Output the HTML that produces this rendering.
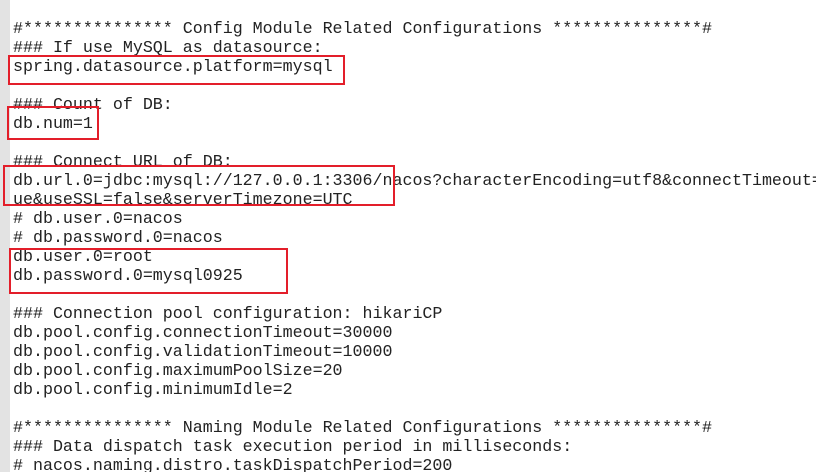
<!DOCTYPE html>
<html><head><meta charset="utf-8"><style>
html,body{margin:0;padding:0;background:#fff;width:816px;height:472px;overflow:hidden;position:relative}
.g{position:absolute;left:0;top:0;width:10px;height:472px;background:#e3e3e3}
pre{position:absolute;left:13px;top:19px;width:803px;height:453px;overflow:hidden;margin:0;font-family:"Liberation Mono","Courier New",monospace;font-size:16.65px;line-height:19px;color:#222;white-space:pre}
.b{position:absolute;border:2px solid #e31e2a;box-sizing:border-box}
</style></head><body>
<div class="g"></div>
<pre>#*************** Config Module Related Configurations ***************#
### If use MySQL as datasource:
spring.datasource.platform=mysql

### Count of DB:
db.num=1

### Connect URL of DB:
db.url.0=jdbc:mysql://127.0.0.1:3306/nacos?characterEncoding=utf8&amp;connectTimeout=1000
ue&amp;useSSL=false&amp;serverTimezone=UTC
# db.user.0=nacos
# db.password.0=nacos
db.user.0=root
db.password.0=mysql0925

### Connection pool configuration: hikariCP
db.pool.config.connectionTimeout=30000
db.pool.config.validationTimeout=10000
db.pool.config.maximumPoolSize=20
db.pool.config.minimumIdle=2

#*************** Naming Module Related Configurations ***************#
### Data dispatch task execution period in milliseconds:
# nacos.naming.distro.taskDispatchPeriod=200</pre>
<div class="b" style="left:8px;top:55px;width:337px;height:30px"></div>
<div class="b" style="left:7px;top:106px;width:92px;height:34px"></div>
<div class="b" style="left:3px;top:165px;width:392px;height:41px"></div>
<div class="b" style="left:9px;top:248px;width:279px;height:46px"></div>
</body></html>
